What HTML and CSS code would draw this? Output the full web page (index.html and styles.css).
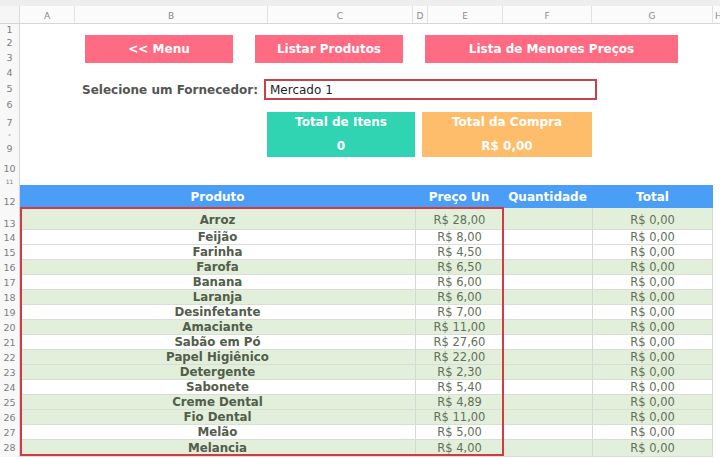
FILE: index.html
```html
<!DOCTYPE html>
<html lang="pt">
<head>
<meta charset="utf-8">
<title>Planilha de Compras</title>
<link rel="stylesheet" href="styles.css">
</head>
<body>
<div class="app">
  <div class="topband"></div>
  <div class="colhead">
    <div class="corner"></div>
    <div class="ch">A</div>
    <div class="ch">B</div>
    <div class="ch">C</div>
    <div class="ch">D</div>
    <div class="ch">E</div>
    <div class="ch">F</div>
    <div class="ch">G</div>
    <div class="ch ch-h">H</div>
  </div>
  <div class="main">
    <div class="rownums">
      <div class="rn h11">1</div>
      <div class="rn h15">2</div>
      <div class="rn h15">3</div>
      <div class="rn h15">4</div>
      <div class="rn h18">5</div>
      <div class="rn h14">6</div>
      <div class="rn h22">7</div>
      <div class="rn h3">8</div>
      <div class="rn h23">9</div>
      <div class="rn h18">10</div>
      <div class="rn h7">11</div>
      <div class="rn h23 bottom">12</div>
      <div class="rn h22 bottom">13</div>
      <div class="rn h15">14</div>
      <div class="rn h15">15</div>
      <div class="rn h15">16</div>
      <div class="rn h15">17</div>
      <div class="rn h15">18</div>
      <div class="rn h15">19</div>
      <div class="rn h15">20</div>
      <div class="rn h15">21</div>
      <div class="rn h15">22</div>
      <div class="rn h15">23</div>
      <div class="rn h15">24</div>
      <div class="rn h15">25</div>
      <div class="rn h15">26</div>
      <div class="rn h15">27</div>
      <div class="rn h15">28</div>
    </div>
    <div class="sheet">
      <div class="buttons">
        <div class="btn btn-menu">&lt;&lt; Menu</div>
        <div class="btn btn-listar">Listar Produtos</div>
        <div class="btn btn-menores">Lista de Menores Preços</div>
      </div>
      <div class="form">
        <div class="form-label">Selecione um Fornecedor:</div>
        <div class="form-input">Mercado 1</div>
      </div>
      <div class="totals">
        <div class="total total-itens"><span>Total de Itens</span><span>0</span></div>
        <div class="total total-compra"><span>Total da Compra</span><span>R$ 0,00</span></div>
      </div>
      <div class="table">
        <div class="thead">
          <div class="th">Produto</div>
          <div class="th">Preço Un</div>
          <div class="th">Quantidade</div>
          <div class="th">Total</div>
        </div>
        <div class="tr g first"><div class="td p">Arroz</div><div class="td v">R$ 28,00</div><div class="td v"></div><div class="td v">R$ 0,00</div></div>
        <div class="tr"><div class="td p">Feijão</div><div class="td v">R$ 8,00</div><div class="td v"></div><div class="td v">R$ 0,00</div></div>
        <div class="tr"><div class="td p">Farinha</div><div class="td v">R$ 4,50</div><div class="td v"></div><div class="td v">R$ 0,00</div></div>
        <div class="tr g"><div class="td p">Farofa</div><div class="td v">R$ 6,50</div><div class="td v"></div><div class="td v">R$ 0,00</div></div>
        <div class="tr"><div class="td p">Banana</div><div class="td v">R$ 6,00</div><div class="td v"></div><div class="td v">R$ 0,00</div></div>
        <div class="tr g"><div class="td p">Laranja</div><div class="td v">R$ 6,00</div><div class="td v"></div><div class="td v">R$ 0,00</div></div>
        <div class="tr"><div class="td p">Desinfetante</div><div class="td v">R$ 7,00</div><div class="td v"></div><div class="td v">R$ 0,00</div></div>
        <div class="tr g"><div class="td p">Amaciante</div><div class="td v">R$ 11,00</div><div class="td v"></div><div class="td v">R$ 0,00</div></div>
        <div class="tr"><div class="td p">Sabão em Pó</div><div class="td v">R$ 27,60</div><div class="td v"></div><div class="td v">R$ 0,00</div></div>
        <div class="tr g"><div class="td p">Papel Higiênico</div><div class="td v">R$ 22,00</div><div class="td v"></div><div class="td v">R$ 0,00</div></div>
        <div class="tr g"><div class="td p">Detergente</div><div class="td v">R$ 2,30</div><div class="td v"></div><div class="td v">R$ 0,00</div></div>
        <div class="tr"><div class="td p">Sabonete</div><div class="td v">R$ 5,40</div><div class="td v"></div><div class="td v">R$ 0,00</div></div>
        <div class="tr g"><div class="td p">Creme Dental</div><div class="td v">R$ 4,89</div><div class="td v"></div><div class="td v">R$ 0,00</div></div>
        <div class="tr g"><div class="td p">Fio Dental</div><div class="td v">R$ 11,00</div><div class="td v"></div><div class="td v">R$ 0,00</div></div>
        <div class="tr"><div class="td p">Melão</div><div class="td v">R$ 5,00</div><div class="td v"></div><div class="td v">R$ 0,00</div></div>
        <div class="tr g last"><div class="td p">Melancia</div><div class="td v">R$ 4,00</div><div class="td v"></div><div class="td v">R$ 0,00</div></div>
      </div>
    </div>
  </div>
  <div class="selection"></div>
</div>
</body>
</html>
```
FILE: styles.css
```css
* { box-sizing: border-box; }
html, body { margin: 0; padding: 0; }
body {
  width: 720px;
  height: 459px;
  overflow: hidden;
  background: #ffffff;
  font-family: "DejaVu Sans", Verdana, sans-serif;
}
.app {
  position: relative;
  width: 720px;
  height: 459px;
  overflow: hidden;
}
.topband {
  height: 6px;
  background: #eeeeee;
}
.colhead {
  display: grid;
  grid-template-columns: 20px 55px 193px 145px 15px 75px 89px 121px 60px;
  height: 18px;
  background: #fbfbfb;
  border-bottom: 1px solid #d6d6d6;
}
.corner {
  border-right: 1px solid #dcdcdc;
  background: #f6f6f6;
}
.ch {
  display: flex;
  align-items: center;
  justify-content: center;
  font-size: 9px;
  color: #8a8a8a;
  border-right: 1px solid #e2e2e2;
  padding-top: 2px;
}
.ch-h {
  justify-content: flex-start;
  padding-left: 2px;
}
.main {
  display: flex;
}
.rownums {
  width: 20px;
  flex: none;
  display: flex;
  flex-direction: column;
  background: #f8f8f8;
  border-right: 1px solid #d6d6d6;
}
.rn {
  display: flex;
  align-items: center;
  justify-content: center;
  overflow: hidden;
  font-size: 9.5px;
  line-height: 10px;
  color: #7d7d7d;
}
.rn.bottom { align-items: flex-end; padding-bottom: 1px; }
.h3 { height: 3px; font-size: 3px; line-height: 3px; }
.h7 { height: 7px; font-size: 6px; line-height: 7px; }
.h11 { height: 11px; }
.h14 { height: 14px; }
.h15 { height: 15px; }
.h18 { height: 18px; }
.h22 { height: 22px; }
.h23 { height: 23px; }

.sheet {
  width: 700px;
  display: flex;
  flex-direction: column;
  padding-top: 11px;
}
.buttons {
  display: flex;
  gap: 22px;
  height: 28px;
  margin-left: 65px;
}
.btn {
  display: flex;
  align-items: center;
  justify-content: center;
  background: #fe6b83;
  color: #ffffff;
  font-weight: bold;
  font-size: 12px;
  width: 148px;
}
.btn-menores { width: 253px; }

.form {
  display: flex;
  align-items: center;
  gap: 6px;
  height: 21px;
  margin-top: 16px;
  margin-left: 60px;
}
.form-label {
  width: 178px;
  text-align: right;
  font-weight: bold;
  font-size: 12px;
  color: #555555;
}
.form-input {
  width: 333px;
  height: 21px;
  border: 2px solid #c8404c;
  background: #ffffff;
  font-size: 12px;
  color: #1e1e1e;
  padding-left: 4px;
  display: flex;
  align-items: center;
}

.totals {
  display: flex;
  gap: 7px;
  height: 45px;
  margin-top: 12px;
  margin-left: 247px;
}
.total {
  display: flex;
  flex-direction: column;
  align-items: center;
  justify-content: space-between;
  padding: 3px 0 4px;
  color: #ffffff;
  font-weight: bold;
  font-size: 12px;
}
.total-itens { width: 148px; background: #30d4b2; }
.total-compra { width: 170px; background: #fdbd6b; }

.table {
  margin-top: 28px;
  width: 693px;
}
.thead {
  display: grid;
  grid-template-columns: 395px 88px 89px 121px;
  height: 23px;
  background: #4a9ef6;
}
.th {
  display: flex;
  align-items: center;
  justify-content: center;
  color: #ffffff;
  font-weight: bold;
  font-size: 12px;
}
.tr {
  display: grid;
  grid-template-columns: 395px 88px 89px 121px;
  height: 15px;
  background: #ffffff;
  border-bottom: 1px solid #d9ddd6;
}
.tr.g { background: #e2efda; }
.tr.first { height: 22px; }
.tr.last { height: 17px; }
.td {
  display: flex;
  align-items: center;
  justify-content: center;
  font-size: 11.5px;
  line-height: 14px;
  overflow: hidden;
}
.td.p {
  font-weight: bold;
  font-size: 11.8px;
  color: #525d4c;
}
.td.v {
  color: #627059;
  border-left: 1px solid #d6d9d3;
}
.td.v:last-child { border-right: 1px solid #d6d9d3; }
.tr.first .td { padding-top: 2px; }

.selection {
  position: absolute;
  left: 20px;
  top: 207px;
  width: 484px;
  height: 249px;
  border: 2px solid #d23a46;
  pointer-events: none;
}
```
